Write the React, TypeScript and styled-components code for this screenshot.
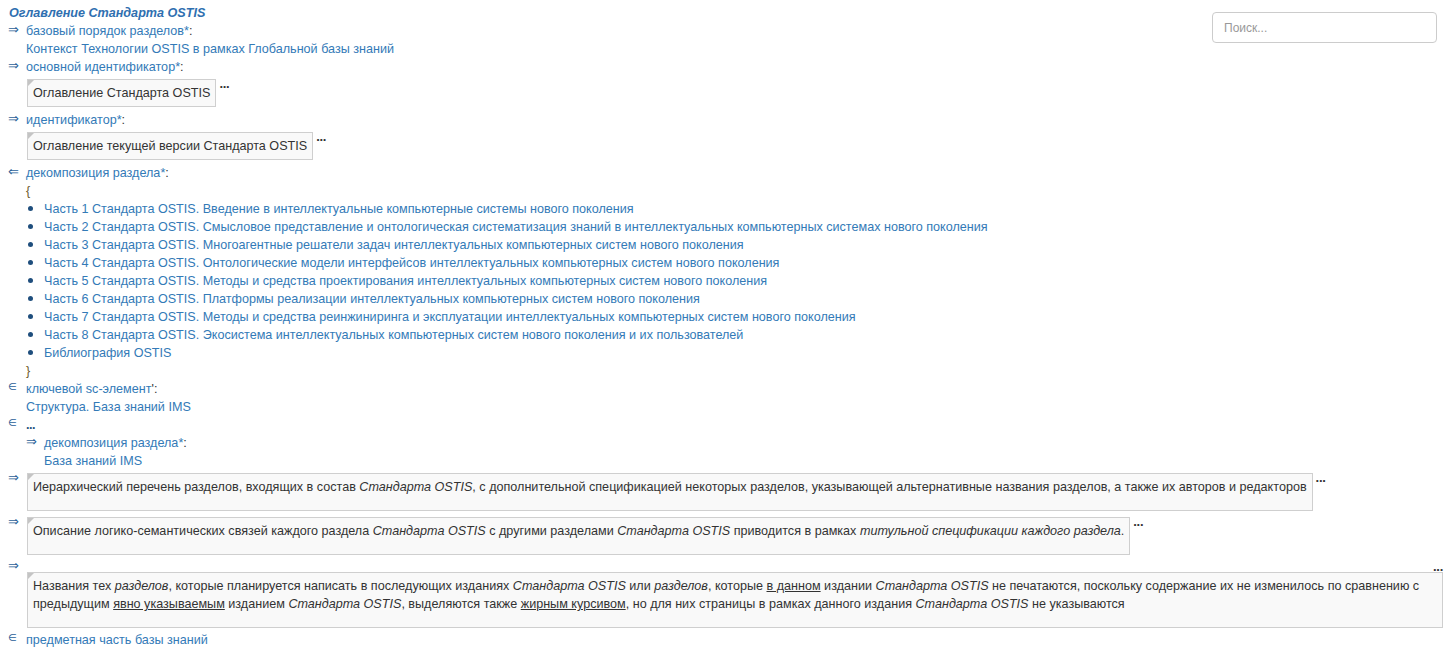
import React from "react";
import styled, { createGlobalStyle } from "styled-components";

const Global = createGlobalStyle`
  html, body { margin: 0; padding: 0; background: #fff; }
  body {
    font-family: "Liberation Sans", Arial, "DejaVu Sans", sans-serif;
    font-size: 12.6px;
    line-height: 18px;
    color: #333;
  }
`;

const Page = styled.div`
  position: relative;
  padding: 4px 8px 0 8px;
`;

const Search = styled.input`
  position: absolute;
  top: 12px;
  right: 14px;
  width: 225px;
  height: 31px;
  box-sizing: border-box;
  border: 1px solid #ccc;
  border-radius: 4px;
  padding: 5px 11px;
  font-family: "Liberation Sans", Arial, sans-serif;
  font-size: 12px;
  color: #555;
  outline: none;
  &::placeholder { color: #999; }
`;

const Title = styled.div`
  font-weight: bold;
  font-style: italic;
  color: #2f6fb0;
  padding-left: 1px;
`;

const Row = styled.div`
  display: flex;
  align-items: flex-start;
`;

const Marker = styled.span<{ $kind: "arrow" | "elem" }>`
  flex: 0 0 18px;
  width: 18px;
  color: #2b5f98;
  font-family: "DejaVu Sans", sans-serif;
  font-size: ${(p) => (p.$kind === "elem" ? "10px" : "13px")};
  line-height: ${(p) => (p.$kind === "elem" ? "13px" : "16px")};
  height: 18px;
`;

const Body = styled.div`
  flex: 1;
  min-width: 0;
`;

const Link = styled.span`
  color: #337ab7;
`;

const Colon = styled.span`
  color: #333;
`;

const Brace = styled.div`
  color: #6d5a2a;
`;

const List = styled.ul`
  list-style: none;
  margin: 0;
  padding: 0;
`;

const Item = styled.li`
  display: flex;
  align-items: center;
  color: #337ab7;
`;

const Bullet = styled.span`
  flex: 0 0 18px;
  display: flex;
  align-items: center;
  &::before {
    content: "";
    width: 5px;
    height: 5px;
    border-radius: 50%;
    background: #1f4e7d;
    margin-left: 2px;
    margin-top: -1px;
  }
`;

const BoxLine = styled.div<{ $gapTop: number; $gapBottom: number }>`
  display: flex;
  align-items: flex-start;
  margin: ${(p) => p.$gapTop}px 0 ${(p) => p.$gapBottom}px 1px;
`;

const Box = styled.div<{ $desc?: boolean; $full?: boolean }>`
  position: relative;
  box-sizing: border-box;
  border: 1px solid #cfcfcf;
  background: #f9f9f9;
  padding: 4px 5px ${(p) => (p.$desc ? "14px" : "4px")} 5px;
  color: #333;
  ${(p) => (p.$full ? "width: 100%;" : "")}
  &::before {
    content: "";
    position: absolute;
    top: 0;
    left: 0;
    border-top: 6px solid #c4c4c4;
    border-right: 6px solid transparent;
  }
`;

const Dots = styled.span`
  font-size: 13px;
  font-weight: bold;
  line-height: 10px;
  color: #333;
  margin-left: 3px;
  letter-spacing: -0.3px;
`;

const DotsLine = styled.div`
  display: flex;
  justify-content: flex-end;
  align-items: flex-end;
  height: 14px;
`;

const Ellipsis = styled.span`
  font-weight: bold;
  color: #23527c;
  letter-spacing: -0.5px;
`;

const Block = styled.div<{ $gapTop: number; $gapBottom: number }>`
  margin: ${(p) => p.$gapTop}px 0 ${(p) => p.$gapBottom}px 1px;
`;

const parts = [
  "Часть 1 Стандарта OSTIS. Введение в интеллектуальные компьютерные системы нового поколения",
  "Часть 2 Стандарта OSTIS. Смысловое представление и онтологическая систематизация знаний в интеллектуальных компьютерных системах нового поколения",
  "Часть 3 Стандарта OSTIS. Многоагентные решатели задач интеллектуальных компьютерных систем нового поколения",
  "Часть 4 Стандарта OSTIS. Онтологические модели интерфейсов интеллектуальных компьютерных систем нового поколения",
  "Часть 5 Стандарта OSTIS. Методы и средства проектирования интеллектуальных компьютерных систем нового поколения",
  "Часть 6 Стандарта OSTIS. Платформы реализации интеллектуальных компьютерных систем нового поколения",
  "Часть 7 Стандарта OSTIS. Методы и средства реинжиниринга и эксплуатации интеллектуальных компьютерных систем нового поколения",
  "Часть 8 Стандарта OSTIS. Экосистема интеллектуальных компьютерных систем нового поколения и их пользователей",
  "Библиография OSTIS",
];

const Label: React.FC<{ text: string; mark?: string }> = ({ text, mark = "*" }) => (
  <div>
    <Link>{text}</Link>
    {mark === "*" ? <Link>*</Link> : <Colon>{mark}</Colon>}
    <Colon>:</Colon>
  </div>
);

export default function App() {
  return (
    <Page>
      <Global />
      <Search placeholder="Поиск..." />
      <Title>Оглавление Стандарта OSTIS</Title>

      <Row>
        <Marker $kind="arrow">⇒</Marker>
        <Body>
          <Label text="базовый порядок разделов" />
          <Link>Контекст Технологии OSTIS в рамках Глобальной базы знаний</Link>
        </Body>
      </Row>

      <Row>
        <Marker $kind="arrow">⇒</Marker>
        <Body>
          <Label text="основной идентификатор" />
          <BoxLine $gapTop={3} $gapBottom={4}>
            <Box>Оглавление Стандарта OSTIS</Box>
            <Dots>...</Dots>
          </BoxLine>
        </Body>
      </Row>

      <Row>
        <Marker $kind="arrow">⇒</Marker>
        <Body>
          <Label text="идентификатор" />
          <BoxLine $gapTop={3} $gapBottom={4}>
            <Box>Оглавление текущей версии Стандарта OSTIS</Box>
            <Dots>...</Dots>
          </BoxLine>
        </Body>
      </Row>

      <Row>
        <Marker $kind="arrow">⇐</Marker>
        <Body>
          <Label text="декомпозиция раздела" />
          <Brace>{"{"}</Brace>
          <List>
            {parts.map((p) => (
              <Item key={p}>
                <Bullet />
                <span>{p}</span>
              </Item>
            ))}
          </List>
          <Brace>{"}"}</Brace>
        </Body>
      </Row>

      <Row>
        <Marker $kind="elem">∈</Marker>
        <Body>
          <Label text="ключевой sc-элемент" mark="'" />
          <Link>Структура. База знаний IMS</Link>
        </Body>
      </Row>

      <Row>
        <Marker $kind="elem">∈</Marker>
        <Body>
          <div>
            <Ellipsis>...</Ellipsis>
          </div>
          <Row>
            <Marker $kind="arrow">⇒</Marker>
            <Body>
              <Label text="декомпозиция раздела" />
              <Link>База знаний IMS</Link>
            </Body>
          </Row>
        </Body>
      </Row>

      <Row>
        <Marker $kind="arrow">⇒</Marker>
        <Body>
          <BoxLine $gapTop={3} $gapBottom={3}>
            <Box $desc>
              Иерархический перечень разделов, входящих в состав <i>Стандарта OSTIS</i>, с дополнительной
              спецификацией некоторых разделов, указывающей альтернативные названия разделов, а также их авторов и
              редакторов
            </Box>
            <Dots>...</Dots>
          </BoxLine>
        </Body>
      </Row>

      <Row>
        <Marker $kind="arrow">⇒</Marker>
        <Body>
          <BoxLine $gapTop={3} $gapBottom={3}>
            <Box $desc>
              Описание логико-семантических связей каждого раздела <i>Стандарта OSTIS</i> с другими разделами{" "}
              <i>Стандарта OSTIS</i> приводится в рамках <i>титульной спецификации каждого раздела</i>.
            </Box>
            <Dots>...</Dots>
          </BoxLine>
        </Body>
      </Row>

      <Row>
        <Marker $kind="arrow">⇒</Marker>
        <Body>
          <DotsLine>
            <Dots>...</Dots>
          </DotsLine>
          <Block $gapTop={0} $gapBottom={3}>
            <Box $desc $full>
              Названия тех <i>разделов</i>, которые планируется написать в последующих изданиях{" "}
              <i>Стандарта OSTIS</i> или <i>разделов</i>, которые <u>в данном</u> издании <i>Стандарта OSTIS</i> не
              печатаются, поскольку содержание их не изменилось по сравнению с предыдущим <u>явно указываемым</u>{" "}
              изданием <i>Стандарта OSTIS</i>, выделяются также <u>жирным курсивом</u>, но для них страницы в рамках
              данного издания <i>Стандарта OSTIS</i> не указываются
            </Box>
          </Block>
        </Body>
      </Row>

      <Row>
        <Marker $kind="elem">∈</Marker>
        <Body>
          <Link>предметная часть базы знаний</Link>
        </Body>
      </Row>
    </Page>
  );
}
